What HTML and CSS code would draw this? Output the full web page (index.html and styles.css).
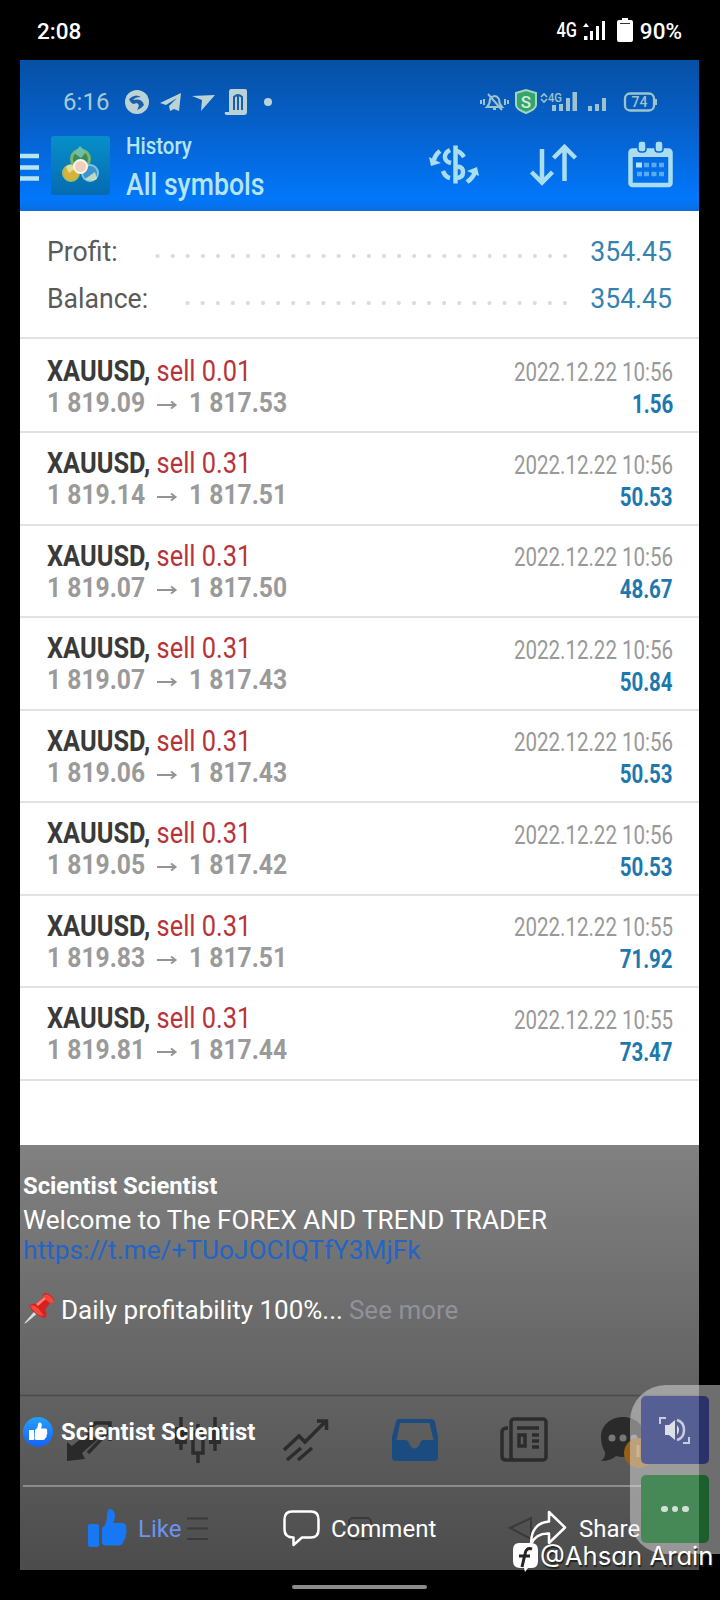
FILE: index.html
```html
<!DOCTYPE html>
<html lang="en">
<head>
<meta charset="utf-8">
<title>History</title>
<link rel="stylesheet" href="styles.css">
</head>
<body>
<div class="screen">
  <div class="phone-bar">
    <span class="clock">2:08</span>
    <span class="net">4G</span>
    <svg class="signal" width="24" height="22" viewBox="0 0 24 22" fill="#fff"><path d="M0 7l3-4 3 4zM1 16h3.500v4H1zM7 11h3v9H7zM13 6h3v14h-3zM19 1h3v19h-3z"/></svg>
    <svg class="battery" width="16" height="25" viewBox="0 0 16 25"><path d="M5 0h6v2h3q2 0 2 2v18q0 2-2 2H2q-2 0-2-2V4q0-2 2-2h3z" fill="#fff"/><path d="M3 5.500h10" stroke="#333" stroke-width="1"/></svg>
    <span class="pct">90%</span>
  </div>

  <div class="photo">
    <div class="app-head">
      <div class="inner-status">
        <span class="inner-time">6:16</span>
        <svg class="notif" width="150" height="28" viewBox="125 88 150 28">
          <g fill="#bcd3d6">
            <circle cx="137" cy="102" r="12"/>
            <path d="M160 103l21-10-2 18-5-2-4 2-1-5 8-8-11 7z"/>
            <path d="M192 96l23-1-14 16 1-11z"/>
            <path d="M231 89h14q2 0 2 2v21q0 3-3 3h-17q-3 0-2-3h4V92q0-3 2-3z"/>
            <circle cx="268" cy="102" r="4"/>
          </g>
          <path d="M129 99q6-6 12-2-6 0-8 3 9-2 11 5-3 4-7 5 4-6-1-7-4 3-7-4z" fill="#1b5eae"/>
          <path d="M234 110V97q4-4 8 0v13M238 95v15" fill="none" stroke="#1b5eae" stroke-width="2"/>
        </svg>
        <svg class="inner-icons" width="178" height="28" viewBox="479 88 178 28">
          <g fill="none" stroke="#9fc3cc" stroke-width="2">
            <path d="M487 107h15q-3-3-3-8-4-6-9 0 0 5-3 8zM488 94l14 16M493 109h3M484 99v6M481 100v4M505 99v6M508 100v4"/>
            <path d="M541 97l3-3 3 3M541 99l3 3 3-3" stroke-width="1.600"/>
            <rect x="625" y="93.500" width="29" height="17" rx="5" stroke-width="2.300"/>
            <path d="M656 99v6"/>
          </g>
          <path d="M516 93l10-3 10 3v12q0 4-10 8-10-4-10-8z" fill="#35a56b" stroke="#a5d5bd" stroke-width="2"/>
          <text x="526" y="108" class="mini" font-size="17" font-weight="500" fill="#d7eee0" text-anchor="middle">S</text>
          <text x="548" y="102" class="mini" font-size="12" font-weight="500" fill="#9fc3cc" textLength="14" lengthAdjust="spacingAndGlyphs">4G</text>
          <text x="639.500" y="107" class="mini" font-size="14" font-weight="500" fill="#9fc3cc" text-anchor="middle">74</text>
          <path d="M552 105h4v6h-4zM559 104h4v7h-4zM566 98h4v13h-4zM572.500 92h4.500v19h-4.500zM588 106h4v5h-4zM595 104h4v7h-4zM602 98h4v13h-4z" fill="#9fc3cc"/>
        </svg>
      </div>
      <div class="title-bar">
        <svg class="menu" width="19" height="30" viewBox="0 0 19 30"><path d="M0 4h19M0 15.500h19M0 26.500h19" stroke="#b5e5ef" stroke-width="4.500"/></svg>
        <svg class="logo" width="59" height="59" viewBox="0 0 59 59">
          <defs><linearGradient id="lg" x1="0" y1="0" x2="0" y2="1"><stop offset="0" stop-color="#078fc9"/><stop offset="1" stop-color="#056bb2"/></linearGradient></defs>
          <rect width="59" height="59" rx="3" fill="url(#lg)"/>
          <circle cx="29.500" cy="23" r="9" fill="#3d8a62" stroke="#7ab765" stroke-width="3"/>
          <path d="M29 10l6 6-5 6-7-5z" fill="#6dc0a4"/>
          <circle cx="20" cy="37" r="8" fill="#d7b33c" stroke="#a9bb5a" stroke-width="2"/>
          <circle cx="39" cy="37" r="8" fill="#3c95cf" stroke="#84c5dd" stroke-width="2"/>
          <path d="M15 31q5-5 10 1l-7 5zM34 43l10-7 2 7q-6 3-12 0z" fill="#dcebb9" opacity=".8"/>
          <circle cx="29.500" cy="30.500" r="6.500" fill="#efd0bd" stroke="#fff4e7" stroke-width="2"/>
        </svg>
        <div class="titles"><div class="sub"><span>History</span></div><div class="main"><span>All symbols</span></div></div>
        <div class="actions">
          <svg width="50" height="50" viewBox="429 140 50 50" fill="none" stroke="#a9def0" stroke-width="4.500">
            <path d="M455.500 145.500v38"/><path d="M456 151q4 0 8 6M456 167q7-1 7 5t-7 6M443 171q2 6 7 7M450 150q-6 3-5 8 1 4 6 5"/>
            <path d="M440 151q-5 4-6 9M467 182q6-4 8-10"/><path d="M429 157l2 9 10-3zM467 171l10-4 2 9z" fill="#a9def0" stroke="none"/>
          </svg>
          <svg width="50" height="50" viewBox="527 140 50 50" fill="none" stroke="#a9def0" stroke-width="4.500"><path d="M541 149v34M530.500 172l10.500 10.500 10.500-10.500M563.500 181v-34M552.500 158l11-11 11 11"/></svg>
          <svg width="50" height="50" viewBox="626 140 50 50">
            <rect x="630.500" y="150.500" width="40" height="34.500" rx="2" fill="none" stroke="#a9def0" stroke-width="4.500"/><path d="M630 150h41v7h-41z" fill="#a9def0"/>
            <g fill="#a9def0" stroke="#0b67d5" stroke-width="1.500"><rect x="638" y="141" width="8" height="11" rx="3"/><rect x="655" y="141" width="8" height="11" rx="3"/></g>
            <path d="M636 165h6" stroke="#b8e6f5" stroke-width="5"/><path d="M644 165h5M651.500 165h5M659 165h5M637 174h5M644 174h5M651.500 174h5M659 174h5" stroke="#58adf2" stroke-width="4.500"/>
          </svg>
        </div>
      </div>
    </div>

    <div class="summary">
      <div class="sum"><span class="k">Profit:</span><i class="dots d1"></i><span class="v">354.45</span></div>
      <div class="sum"><span class="k">Balance:</span><i class="dots d2"></i><span class="v">354.45</span></div>
    </div>

    <div class="deals">
      <div class="deal"><div class="l"><div class="sym"><span><b>XAUUSD,</b> <em>sell 0.01</em></span></div><div class="px"><span>1 819.09</span><svg width="22" height="10" viewBox="0 0 22 10"><path d="M1 5h18M15 1.500L19.500 5 15 8.500" fill="none" stroke="#949494" stroke-width="2"/></svg><span>1 817.53</span></div></div><div class="r"><span class="date">2022.12.22 10:56</span><span class="val">1.56</span></div></div>
      <div class="deal"><div class="l"><div class="sym"><span><b>XAUUSD,</b> <em>sell 0.31</em></span></div><div class="px"><span>1 819.14</span><svg width="22" height="10" viewBox="0 0 22 10"><path d="M1 5h18M15 1.500L19.500 5 15 8.500" fill="none" stroke="#949494" stroke-width="2"/></svg><span>1 817.51</span></div></div><div class="r"><span class="date">2022.12.22 10:56</span><span class="val">50.53</span></div></div>
      <div class="deal"><div class="l"><div class="sym"><span><b>XAUUSD,</b> <em>sell 0.31</em></span></div><div class="px"><span>1 819.07</span><svg width="22" height="10" viewBox="0 0 22 10"><path d="M1 5h18M15 1.500L19.500 5 15 8.500" fill="none" stroke="#949494" stroke-width="2"/></svg><span>1 817.50</span></div></div><div class="r"><span class="date">2022.12.22 10:56</span><span class="val">48.67</span></div></div>
      <div class="deal"><div class="l"><div class="sym"><span><b>XAUUSD,</b> <em>sell 0.31</em></span></div><div class="px"><span>1 819.07</span><svg width="22" height="10" viewBox="0 0 22 10"><path d="M1 5h18M15 1.500L19.500 5 15 8.500" fill="none" stroke="#949494" stroke-width="2"/></svg><span>1 817.43</span></div></div><div class="r"><span class="date">2022.12.22 10:56</span><span class="val">50.84</span></div></div>
      <div class="deal"><div class="l"><div class="sym"><span><b>XAUUSD,</b> <em>sell 0.31</em></span></div><div class="px"><span>1 819.06</span><svg width="22" height="10" viewBox="0 0 22 10"><path d="M1 5h18M15 1.500L19.500 5 15 8.500" fill="none" stroke="#949494" stroke-width="2"/></svg><span>1 817.43</span></div></div><div class="r"><span class="date">2022.12.22 10:56</span><span class="val">50.53</span></div></div>
      <div class="deal"><div class="l"><div class="sym"><span><b>XAUUSD,</b> <em>sell 0.31</em></span></div><div class="px"><span>1 819.05</span><svg width="22" height="10" viewBox="0 0 22 10"><path d="M1 5h18M15 1.500L19.500 5 15 8.500" fill="none" stroke="#949494" stroke-width="2"/></svg><span>1 817.42</span></div></div><div class="r"><span class="date">2022.12.22 10:56</span><span class="val">50.53</span></div></div>
      <div class="deal"><div class="l"><div class="sym"><span><b>XAUUSD,</b> <em>sell 0.31</em></span></div><div class="px"><span>1 819.83</span><svg width="22" height="10" viewBox="0 0 22 10"><path d="M1 5h18M15 1.500L19.500 5 15 8.500" fill="none" stroke="#949494" stroke-width="2"/></svg><span>1 817.51</span></div></div><div class="r"><span class="date">2022.12.22 10:55</span><span class="val">71.92</span></div></div>
      <div class="deal"><div class="l"><div class="sym"><span><b>XAUUSD,</b> <em>sell 0.31</em></span></div><div class="px"><span>1 819.81</span><svg width="22" height="10" viewBox="0 0 22 10"><path d="M1 5h18M15 1.500L19.500 5 15 8.500" fill="none" stroke="#949494" stroke-width="2"/></svg><span>1 817.44</span></div></div><div class="r"><span class="date">2022.12.22 10:55</span><span class="val">73.47</span></div></div>
    </div>

    <div class="post">
      <svg class="dim-nav" width="679" height="425" viewBox="20 1145 679 425">
        <path d="M20 1395.500h679" stroke="#4b4b4b" stroke-width="1.500"/>
        <g fill="none" stroke="#2c2c2c" stroke-width="3.500">
          <path d="M67 1461v-19l5 4 17-14 8 8-15 13 3 6z" fill="#2a2a2a" stroke="none"/>
          <path d="M88 1453l22-23M94 1423h16v18M88 1430l8-7"/>
          <path d="M181 1417v33M215 1417v34M198 1424v8M198 1453v10"/><path d="M181 1427v17M215 1427v17" stroke-width="12"/><rect x="193" y="1432" width="10" height="21"/>
          <path d="M284 1450l15-14 6 6 21-21M317 1421h9.500v9M287 1460l14-12M298 1460l14-12"/>
          <rect x="511" y="1419" width="35" height="41" rx="3"/><path d="M508 1428q-6 0-6 4v24q0 4 4 4h8M517 1428h22M532 1435h7M532 1441h7M532 1447h7"/><path d="M519 1435h6v11h-6z"/>
        </g>
        <path d="M398 1419h33q3 0 4 3l3 15v20q0 4-4 4h-38q-4 0-4-4v-20l4-15q1-3 2-3zm2 4l-3.500 17h9q3 0 4 5 5 7 10 0 1-5 4-5h10l-4-17z" fill="#1a4c80" fill-rule="evenodd"/>
        <path d="M623 1417c13 0 22 9 22 20s-9 20-22 20q-4 0-7-1-5 5-15 5 5-4 4-9-4-6-4-15c0-11 9-20 22-20z" fill="#2a2a2a"/>
        <circle cx="612" cy="1438" r="3.500" fill="#777"/><circle cx="623" cy="1438" r="3.500" fill="#777"/><circle cx="634" cy="1438" r="3.500" fill="#777"/>
        <circle cx="639" cy="1453" r="15" fill="#976018"/><path d="M638 1445v12" stroke="#b98b4a" stroke-width="3"/>
        <g fill="none" stroke="#3a3a3a" stroke-width="2"><path d="M187 1518.500h21M187 1528.500h21M187 1539h21"/><rect x="349" y="1518" width="22" height="21" rx="4"/><path d="M531 1518v21l-21-11z"/></g>
      </svg>
      <div class="caption">
        <div class="author">Scientist Scientist</div>
        <div class="text"><span class="t1">Welcome to The FOREX AND TREND TRADER</span></div>
        <div class="text"><span class="link">https://t.me/+TUoJOCIQTfY3MjFk</span></div>
        <div class="text gap"></div>
        <div class="text pinline">
          <svg width="32" height="32" viewBox="0 0 32 32"><path d="M1 30.500l12-14 3 2.500L3 30z" fill="#d5dde2"/><path d="M6 13q3-3 7-2l7-7q-1-3 2-4 5 0 9 6 1 3-4 4l-5 7q3 4 0 8-10-2-16-12z" fill="#d8201d"/><path d="M20 3q4-4 10 3 2 4-2 4-4-1-8-7zM7 13q3-2 8 2l6 8q-8 0-14-10z" fill="#f5473e"/><path d="M13 11l8-7 2 2-8 7z" fill="#ff7b6e"/></svg>
          <span class="daily">Daily profitability 100%...</span><span class="more">See more</span>
        </div>
      </div>
      <div class="liked">
        <svg width="30" height="30" viewBox="0 0 30 30"><defs><linearGradient id="bl" x1="0" y1="0" x2="0" y2="1"><stop offset="0" stop-color="#24a0fb"/><stop offset="1" stop-color="#1462f5"/></linearGradient></defs><circle cx="15" cy="15" r="15" fill="url(#bl)"/><path d="M6 13h5v10H6zM12 13q3-2 3-5 0-3 2-2.500 3 1 1 6h5q2 1 1 3 1 2-.500 3.500 1 2-1 3-.500 2-2.500 2h-6q-2 0-2.500-1z" fill="#fff"/></svg>
        <span>Scientist Scientist</span>
      </div>
      <div class="buttons">
        <div class="btn like"><svg width="39" height="39" viewBox="0 0 39 39" fill="#1877f2"><rect y="15" width="11" height="23" rx="2"/><path d="M14 19q5-3 5-13Q19 0 22 0c6 1 6 8 3 14h10q4 1 3 5 1 3 0 6 0 4-2 6-1 5-5 5.500H19q-4 0-5-2z"/></svg><span>Like</span></div>
        <div class="btn comment"><svg width="37" height="37" viewBox="0 0 37 37" fill="none" stroke="#fff" stroke-width="2.500" stroke-linejoin="round"><path d="M9 1.500h19q7.500 0 7.500 8v10q0 8-7.500 8h-9l-8.500 7.500v-7.500q-9 0-9-8v-10q0-8 7.500-8z"/></svg><span>Comment</span></div>
        <div class="btn share"><svg width="38" height="38" viewBox="0 0 38 38" fill="none" stroke="#fff" stroke-width="2.500" stroke-linejoin="round"><path d="M20 2l16 15.500-16 15.500v-9.500Q7 23 2 34 2 13 20 11.500z"/></svg><span>Share</span></div>
      </div>
    </div>
  </div>

  <div class="home"></div>

  <div class="float">
    <div class="tile blue"><svg width="32" height="27" viewBox="0 0 32 27" fill="none" stroke="#c8cce0" stroke-width="2"><path d="M1 7V1h6M30 20v6h-6"/><path d="M6 8h4l6-5v20l-6-5H6z" fill="#dcdfe8" stroke="none"/><path d="M18 8q4 5 0 10z" fill="#dcdfe8" stroke="none"/><path d="M18 3q7 2 7 10t-7 10" stroke-width="2.500"/></svg></div>
    <div class="tile green"><i></i><i></i><i></i></div>
  </div>
  <div class="mark">
    <svg width="25" height="29" viewBox="0 0 25 29"><path d="M6 0h12q7 0 7 7v11q0 7-6 7h-4l-3 4-1-4H7q-7 0-7-7V7q0-7 6-7z" fill="#fff"/><path d="M19 6q-6-2-7 5l-3 13M6 13h11" fill="none" stroke="#222" stroke-width="3"/></svg>
    <span>@Ahsan Arain</span>
  </div>
</div>
</body>
</html>
```
FILE: styles.css
```css
* { box-sizing: border-box; }
body { margin: 0; background: #000; font-family: Roboto, "Liberation Sans", sans-serif; }
svg { display: block; flex: none; }
span { white-space: nowrap; }
.screen { position: relative; width: 720px; height: 1600px; overflow: hidden; background: #000; }

.phone-bar { height: 60px; display: flex; align-items: center; padding: 2px 38px 0 37px; color: #fff; font-size: 22.5px; font-weight: 500; }
.net { margin-left: auto; font-size: 20px; font-weight: 500; transform: scaleX(.82); transform-origin: right; margin-top: -2px; }
.signal { margin-left: 6px; }
.battery { margin-left: 10px; margin-top: -1px; }
.pct { margin-left: 7px; }

.photo { width: 679px; height: 1510px; margin-left: 20px; background: #fff; display: flex; flex-direction: column; }

.app-head { height: 151px; background: linear-gradient(#0650a4, #0661cc 45%, #0177fb 92%, #0a6fe0); padding-top: 28px; }
.inner-status { display: flex; height: 28px; line-height: 28px; }
.inner-time { width: 105px; padding-left: 43px; font-size: 24px; color: #a4cbd5; letter-spacing: .1px; }
.inner-icons { margin-left: 204px; }
.title-bar { display: flex; align-items: flex-start; }
.menu { margin-top: 36px; }
.logo { margin: 20px 16px 0 12px; }
.titles { padding-top: 12px; color: #b5e5ef; font-weight: 500; }
.titles span { display: inline-block; transform-origin: left; }
.sub { font-size: 23.5px; line-height: 36px; }
.sub span { transform: scaleX(.87); }
.main { font-size: 31px; line-height: 41px; }
.main span { transform: scaleX(.86); }
.actions { margin: 24px 23px 0 auto; display: flex; gap: 48.5px; }

.summary { height: 128px; padding: 18px 27px 0; border-bottom: 2px solid #e2e2e2; }
.sum { display: flex; align-items: center; height: 47px; line-height: 47px; font-size: 27px; color: #5a5a5a; }
.k { transform: scaleX(.985); transform-origin: left; }
.v { color: #3582b0; transform: scaleX(.985); transform-origin: right; }
.dots { margin: 7px 16px 0 auto; height: 6px; background: radial-gradient(circle, #dcdcdc 1.800px, transparent 2.300px) 0 0 / 15.100px 6px; }
.d1 { width: 423px; }
.d2 { width: 392.600px; }

.deals { flex: 1; padding-top: 1.500px; }
.deal { display: flex; justify-content: space-between; height: 92.500px; padding: 14px 26px 0 27px; border-bottom: 2px solid #e2e2e2; }
.sym { height: 32px; line-height: 32px; font-size: 29.500px; color: #3a3a3a; }
.sym > span { display: inline-block; transform: scaleX(.86); transform-origin: left; }
.sym em { font-style: normal; color: #b83338; }
.px { display: grid; grid-template-columns: 109px 33px auto; align-items: center; line-height: 32px; font-size: 28.500px; font-weight: 700; color: #9a9a9a; }
.px span { transform: scaleX(.865); transform-origin: left; }
.px svg { margin-top: 4px; }
.r { display: flex; flex-direction: column; align-items: flex-end; padding-top: 2.500px; font-size: 25px; line-height: 32px; }
.r span { transform: scaleX(.82); transform-origin: right; }
.date { color: #999; }
.val { color: #1d78ae; font-weight: 700; }

.post { position: relative; height: 425px; background: linear-gradient(#818181, #4c4c4c); color: #fff; }
.dim-nav { position: absolute; left: 0; top: 0; }
.caption { position: relative; padding: 26px 0 0 3px; height: 246px; }
.author { font-size: 23.800px; line-height: 30px; font-weight: 700; margin-bottom: 4px; }
.text { height: 30px; line-height: 30px; font-size: 26px; }
.text span { display: inline-block; transform-origin: left; }
.t1 { transform: scaleX(1.004); }
.link { color: #2365c4; transform: scaleX(1.01); }
.pinline { display: flex; }
.pinline svg { margin-top: -2px; }
.daily { margin-left: 6px; }
.more { color: #8f929b; margin-left: 6px; }
.liked { position: relative; display: flex; align-items: center; height: 96px; padding-bottom: 13px; gap: 8px; margin: 0 2px 0 3px; border-bottom: 2px solid #8c8c8c; font-size: 23.800px; font-weight: 700; }
.buttons { position: relative; display: flex; align-items: center; height: 83px; font-size: 24px; }
.btn { display: flex; align-items: center; }
.like { width: 263px; padding-left: 68px; gap: 11px; color: #6d93ee; }
.comment { width: 246px; gap: 11px; }
.share { gap: 12px; }

.home { width: 135px; height: 4px; border-radius: 2px; background: #8b8b8b; margin: 15px 0 0 292px; }

.float { position: absolute; left: 630px; top: 1385px; width: 90px; height: 169px; padding: 11px; border-radius: 36px 0 0 36px; background: rgba(229, 229, 229, .48); display: flex; flex-direction: column; gap: 11px; }
.tile { width: 68px; height: 68px; border-radius: 5px; display: flex; align-items: center; justify-content: center; gap: 4px; }
.blue { background: linear-gradient(90deg, #555f94 58px, #2a3268 58px); }
.green { background: linear-gradient(90deg, #478857 58px, #1c5f2d 58px); }
.green i { width: 6.500px; height: 6.500px; border-radius: 50%; background: #d5dfd6; }
.mark { position: absolute; left: 513px; top: 1543px; display: flex; color: #fff; }
.mark span { margin-left: 2px; font: 400 25.700px/26px Inter, sans-serif; font-feature-settings: "cv11"; text-shadow: 1px 2px 1px #222; }
```
